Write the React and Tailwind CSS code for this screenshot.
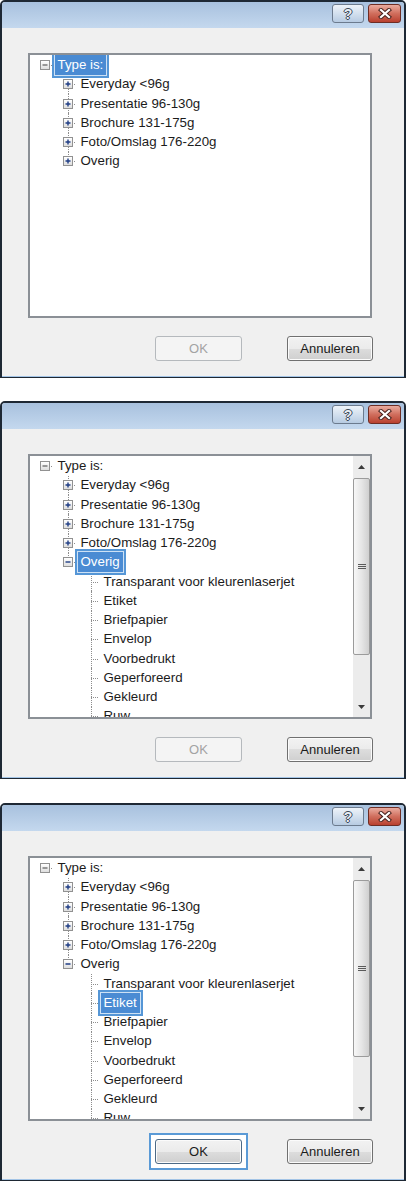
import React from 'react';

const topRows = [
  { label: 'Type is:', level: 0, exp: 'minus' },
  { label: 'Everyday <96g', level: 1, exp: 'plus' },
  { label: 'Presentatie 96-130g', level: 1, exp: 'plus' },
  { label: 'Brochure 131-175g', level: 1, exp: 'plus' },
  { label: 'Foto/Omslag 176-220g', level: 1, exp: 'plus' },
];

const children = [
  'Transparant voor kleurenlaserjet',
  'Etiket',
  'Briefpapier',
  'Envelop',
  'Voorbedrukt',
  'Geperforeerd',
  'Gekleurd',
  'Ruw',
];

const Expander = ({ type, gray }) => (
  <span className="absolute left-[6px] top-1/2 -mt-[5px] flex h-[10px] w-[10px] items-center justify-center border border-[#919191] bg-gradient-to-b from-white to-[#dedede]">
    <svg width="8" height="8" viewBox="0 0 8 8">
      <line x1="1.5" y1="4" x2="6.5" y2="4" stroke={gray ? '#7a7a7a' : '#1f3d84'} strokeWidth="1.4" />
      {type === 'plus' && <line x1="4" y1="1.5" x2="4" y2="6.5" stroke="#1f3d84" strokeWidth="1.4" />}
    </svg>
  </span>
);

const TreeRow = ({ row, selected }) => (
  <div className={`relative flex h-[19.25px] items-center ${selected ? 'z-10' : ''}`}>
    {Array.from({ length: row.level }).map((_, i) => (
      <div key={i} className="h-full w-[23px] shrink-0" />
    ))}
    <div className="relative h-full w-[18px] shrink-0">
      {row.level > 0 && (
        <span className={`absolute left-[11px] top-0 border-l border-dotted border-[#8e8e8e] ${row.last ? 'h-1/2' : 'bottom-0'}`} />
      )}
      <span className="absolute left-[11px] right-0 top-1/2 border-t border-dotted border-[#8e8e8e]" />
      {row.exp && <Expander type={row.exp} gray={row.level === 0} />}
    </div>
    <span
      className={`shrink-0 whitespace-nowrap border-2 px-[4px] leading-[22px] ${
        selected
          ? 'border-[#5596d6] bg-[#4a8bd3] text-white shadow-[inset_0_0_0_1px_#cde1f5]'
          : 'border-transparent text-[#1b1b1b]'
      }`}
    >
      {row.label}
    </span>
  </div>
);

const Arrow = ({ down }) => (
  <svg width="7" height="4" viewBox="0 0 7 4">
    <polygon points={down ? '0,0 7,0 3.5,4' : '0,4 7,4 3.5,0'} fill="#3a3a3a" />
  </svg>
);

const Scrollbar = () => (
  <div className="flex h-full w-[17px] shrink-0 flex-col bg-[#ececec]">
    <div className="flex h-[21px] items-center justify-center">
      <Arrow />
    </div>
    <div className="flex-1">
      <div className="mt-[1px] flex h-[177px] items-center justify-center rounded-[2px] border border-[#9b9b9b] bg-gradient-to-r from-[#f7f7f7] via-[#e6e6e6] to-[#cfcfcf]">
        <div className="flex flex-col gap-[1px]">
          <span className="h-[1px] w-[8px] bg-[#5a5a5a]" />
          <span className="h-[1px] w-[8px] bg-[#5a5a5a]" />
          <span className="h-[1px] w-[8px] bg-[#5a5a5a]" />
        </div>
      </div>
    </div>
    <div className="flex h-[21px] items-center justify-center">
      <Arrow down />
    </div>
  </div>
);

const TitleBar = () => (
  <div className="flex h-[26px] shrink-0 items-start justify-end gap-[4px] bg-gradient-to-b from-[#a8c1de] to-[#c4d8ee] pr-[3px] pt-[2px]">
    <div className="flex h-[19px] w-[32px] items-center justify-center rounded-[3px] border border-[#6c7b8e] bg-gradient-to-b from-[#eef3f9] via-[#d3e0ee] to-[#b7cbe2] text-[14px] font-bold leading-none text-[#e9eef4] [text-shadow:1px_0_0_#3b4756,-1px_0_0_#3b4756,0_1px_0_#3b4756,0_-1px_0_#3b4756]">
      ?
    </div>
    <div className="flex h-[19px] w-[33px] items-center justify-center rounded-[3px] border border-[#6e2d24] bg-gradient-to-b from-[#e9ab9f] via-[#d06e5d] to-[#b9402f]">
      <svg width="14" height="11" viewBox="0 0 14 11">
        <path d="M3 2 L11 9 M11 2 L3 9" stroke="#4a2420" strokeWidth="4.2" strokeLinecap="square" />
        <path d="M3 2 L11 9 M11 2 L3 9" stroke="#ffffff" strokeWidth="2.2" strokeLinecap="square" />
      </svg>
    </div>
  </div>
);

const Dialog = ({ step }) => {
  const expanded = step > 1;
  const rows = [
    ...topRows,
    { label: 'Overig', level: 1, exp: expanded ? 'minus' : 'plus', last: true },
    ...(expanded ? children.map((c) => ({ label: c, level: 2 })) : []),
  ];
  const selected = step === 1 ? 'Type is:' : step === 2 ? 'Overig' : 'Etiket';

  return (
    <div className="flex h-[378px] w-[406px] shrink-0 flex-col overflow-hidden rounded-t-[5px] border-2 border-b-[1px] border-[#1e2834] bg-[#f0f0f0]">
      <TitleBar />
      <div className="flex flex-1 flex-col border-b border-[#a3c4e6] pt-[25px]">
        <div className="ml-[26px] flex h-[265px] w-[344px] border-2 border-[#8b9096] bg-white">
          <div className="flex-1 overflow-hidden pl-[3.5px] pt-[0.5px] text-[13.3px]">
            {rows.map((r) => (
              <TreeRow key={r.label} row={r} selected={r.label === selected} />
            ))}
          </div>
          {expanded && <Scrollbar />}
        </div>

        <div className="mt-[18px] flex justify-end gap-[45px] pr-[31px] text-[13px]">
          {step === 3 ? (
            <span className="-m-[6px] border-2 border-[#5a9ad6] bg-white p-[4px]">
              <button className="flex h-[25px] w-[87px] items-center justify-center rounded-[3px] border border-[#4d6a86] bg-[linear-gradient(#f2f2f2,#ebebeb_50%,#dddddd_50%,#cfcfcf)] text-[#1b1b1b] shadow-[inset_0_0_0_1px_#fbfbfb]">
                OK
              </button>
            </span>
          ) : (
            <button className="flex h-[25px] w-[87px] items-center justify-center rounded-[3px] border border-[#b5b9bd] bg-[#f4f4f4] text-[#a3a3a3]">
              OK
            </button>
          )}
          <button className="flex h-[25px] w-[86px] items-center justify-center rounded-[3px] border border-[#707070] bg-[linear-gradient(#f2f2f2,#ebebeb_50%,#dddddd_50%,#cfcfcf)] text-[#1b1b1b] shadow-[inset_0_0_0_1px_#fbfbfb]">
            Annuleren
          </button>
        </div>
      </div>
    </div>
  );
};

const App = () => (
  <div className="flex w-[407px] flex-col bg-white font-['Liberation_Sans',Arial,sans-serif]">
    <Dialog step={1} />
    <div className="h-[23px]" />
    <Dialog step={2} />
    <div className="h-[24px]" />
    <Dialog step={3} />
  </div>
);

export default App;
